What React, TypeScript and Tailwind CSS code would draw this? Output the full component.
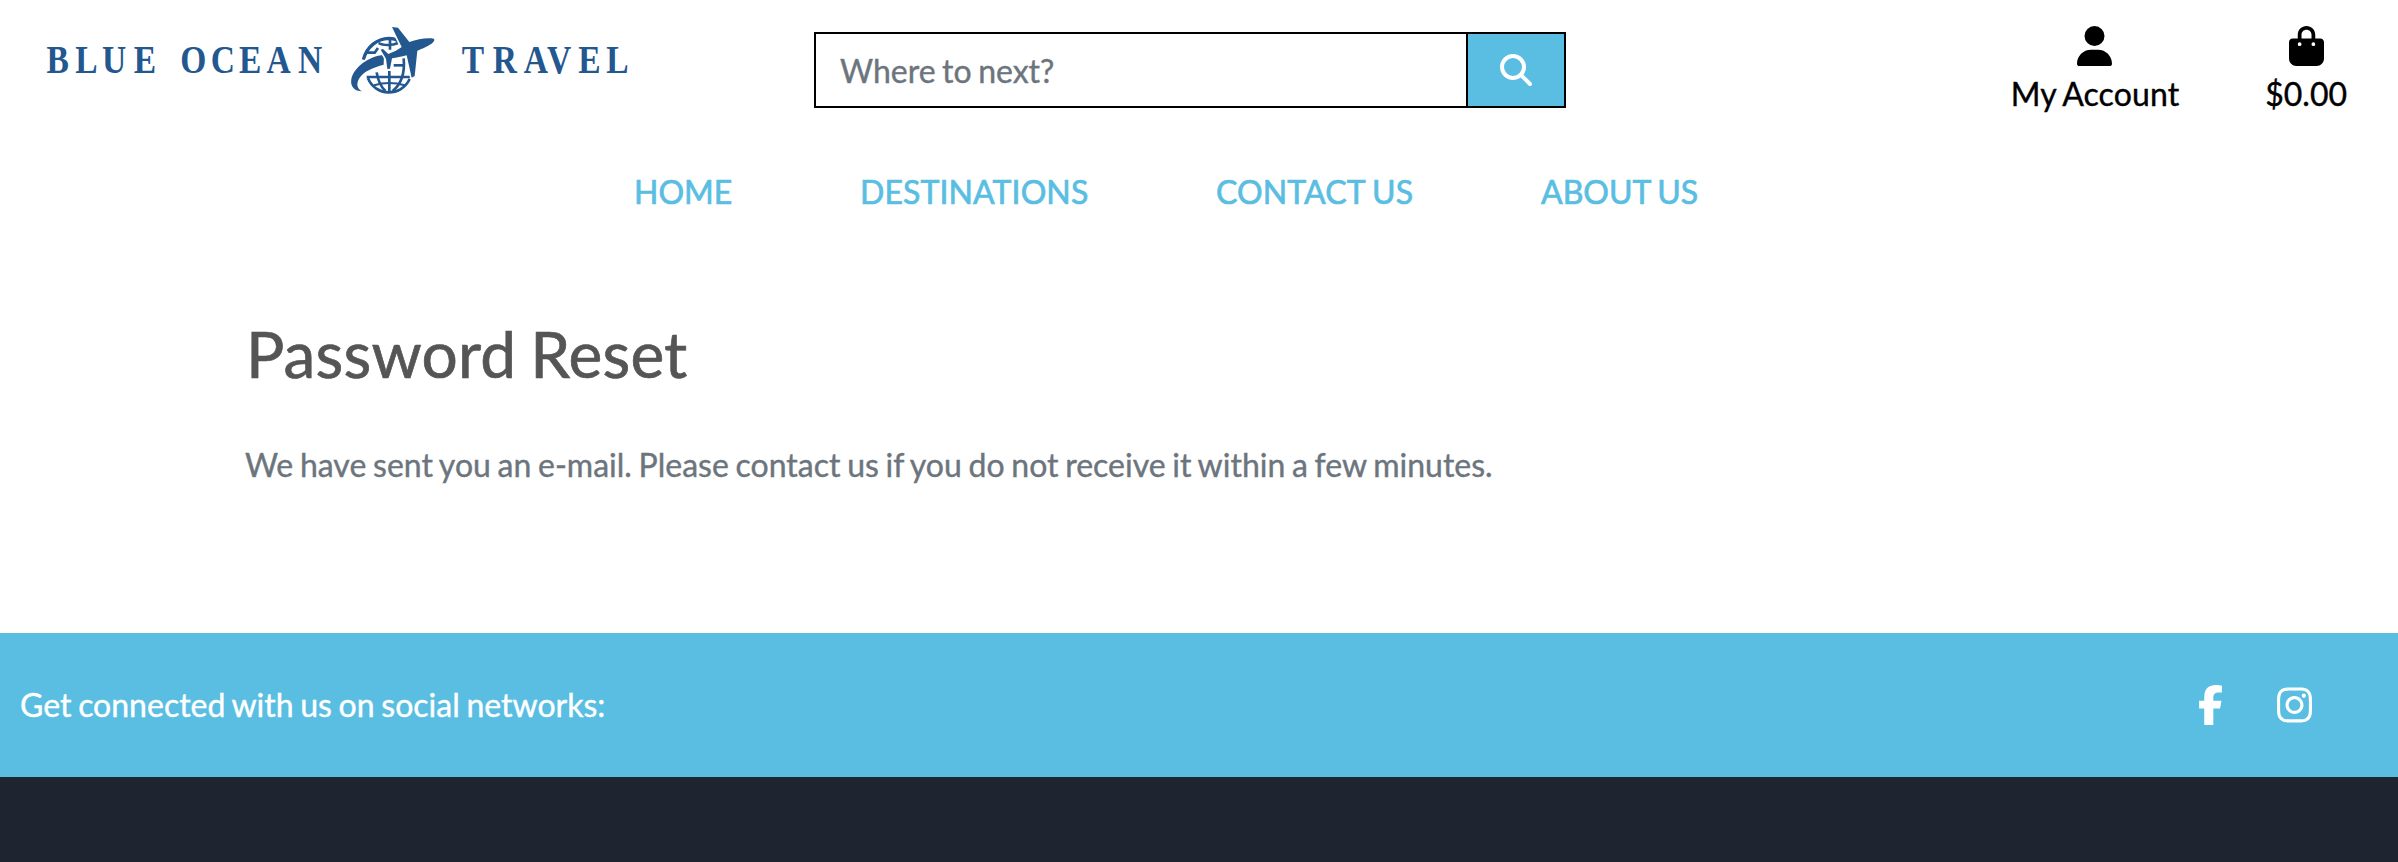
import { FaUser, FaBagShopping, FaMagnifyingGlass, FaFacebookF, FaInstagram } from "react-icons/fa6";

const links = [
  { label: "HOME", style: "w-[226px]" },
  { label: "DESTINATIONS", style: "w-[356px] tracking-[0.1px]" },
  { label: "CONTACT US", style: "w-[325px] tracking-[0.1px] [word-spacing:-1px]" },
  { label: "ABOUT US", style: "w-[200px] [word-spacing:-1.5px]" },
];

function Logo() {
  return (
    <svg className="h-[110px] w-[640px]" viewBox="0 0 640 110" fill="#22578f" aria-label="Blue Ocean Travel">
      <g className="font-['Liberation_Serif',serif] text-[39px] font-bold">
        <g transform="translate(0 73) scale(.86 1)">
          <text x="54 87.5 118.5 155.5 209.5 245 278 310 346.5">BLUEOCEAN</text>
          <text x="537 573 609 636 672.5 705">TRAVEL</text>
        </g>
      </g>
      <g transform="translate(340 15) scale(.33333)">
        <g fill="none" stroke="#22578f" strokeWidth="8">
          <path d="M70 134C80 96 110 71 147 70c13 0 22 3 31 9" strokeWidth="10" />
          <path d="M78 113h26l10-14" />
          <path d="M116 84c12 8 42 8 58 0M150 72v32" />
          <path d="M80 186h131M148 168v64M84 190c22 54 98 58 125 2" />
          <path d="M110 172c4 26 12 42 26 56M191 130c4 44-8 78-33 98" />
          <path d="M161 151h34" />
          <path d="M102 211c30-9 62-9 92 0" strokeWidth="6" />
        </g>
        <g stroke="#fff" strokeWidth="10" strokeLinejoin="round" className="[paint-order:stroke]">
          <path d="M132 119C86 124 42 156 34 192c-4 24 10 36 32 37-16-9-18-25-7-41 15-22 42-30 72-39z" />
          <path d="M156 36l18 2 34 43c25-8 52-14 73-10 8 4-6 17-24 25-9 5-18 8-25 11l-8 76-9 5-15-67c-16 4-31 7-44 9l-6 31-8 1-4-31-16-27 7-2 16 15c14-5 29-13 40-21z" />
        </g>
      </g>
    </svg>
  );
}

export default function App() {
  return (
    <div className="flex h-[862px] w-full flex-col overflow-hidden bg-white font-[Lato,sans-serif] text-[32px] leading-[48px] [-webkit-text-stroke:0.4px_currentColor]">
      <header className="flex h-[168px] shrink-0 items-start [&_svg]:[-webkit-text-stroke:0px]">
        <Logo />
        <form className="mt-8 ml-[174px] flex h-[76px] w-[752px] border-2 border-black">
          <input
            type="text"
            placeholder="Where to next?"
            className="w-[650px] px-6 pt-0.5 [word-spacing:-1.7px] outline-none placeholder:text-[#6c757d]"
          />
          <button type="button" aria-label="Search" className="flex flex-1 items-center justify-center border-l-2 border-black bg-[#59bee2] text-white">
            <FaMagnifyingGlass className="size-8" />
          </button>
        </form>
        <div className="ml-auto flex pt-[26px] pr-[51px] text-black">
          <a className="mr-[86px] flex flex-col items-center">
            <FaUser className="mb-1 h-10 w-[35px]" />
            <span className="tracking-[0.1px] [word-spacing:-1px]">My Account</span>
          </a>
          <a className="flex flex-col items-center">
            <FaBagShopping className="mb-1 h-10 w-[35px]" />
            <span>$0.00</span>
          </a>
        </div>
      </header>
      <nav className="flex h-12 shrink-0 pl-[634px] text-[#59bee2] [-webkit-text-stroke:0.7px_currentColor]">
        {links.map((link) => (
          <a key={link.label} className={link.style + " whitespace-nowrap"}>{link.label}</a>
        ))}
      </nav>
      <main className="flex grow flex-col pt-[99px] pl-[246px]">
        <h1 className="mb-[49px] text-[64px] leading-[77px] tracking-[0.2px] text-[#555] [word-spacing:-2.5px] [-webkit-text-stroke:0.7px_currentColor]">Password Reset</h1>
        <p className="-ml-px text-[#6c757d] [word-spacing:-1.47px]">
          We have sent you an e-mail. Please contact us if you do not receive it within a few minutes.
        </p>
      </main>
      <footer className="h-[229px] shrink-0 bg-[#1e2430] text-white">
        <div className="flex h-36 items-center justify-between bg-[#59bee2] pr-[86px] pl-5">
          <span className="[word-spacing:-1.5px]">Get connected with us on social networks:</span>
          <div className="flex items-center gap-[54px]">
            <FaFacebookF className="h-10 w-[25px]" />
            <FaInstagram className="h-10 w-[35px]" />
          </div>
        </div>
      </footer>
    </div>
  );
}
